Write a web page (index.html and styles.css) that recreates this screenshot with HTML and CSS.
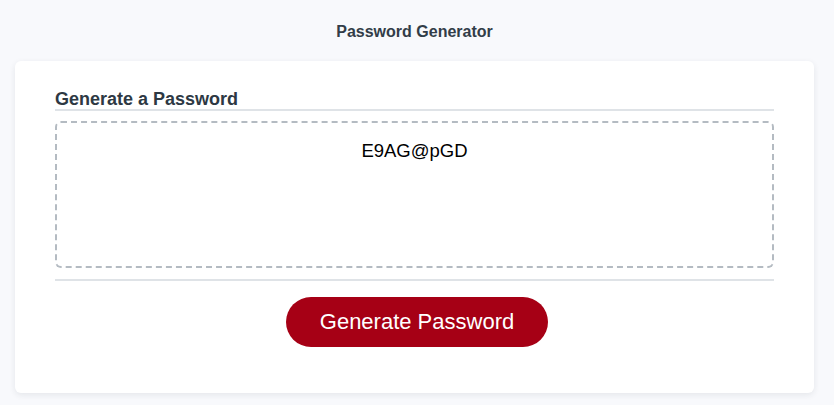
FILE: index.html
```html
<!DOCTYPE html>
<html lang="en">
<head>
<meta charset="utf-8">
<title>Password Generator</title>
<link rel="stylesheet" href="styles.css">
</head>
<body>
  <div class="wrapper">
    <header class="title">Password Generator</header>
    <div class="card">
      <h2 class="card-heading">Generate a Password</h2>
      <div class="card-body">
        <div class="password-box">E9AG@pGD</div>
      </div>
      <div class="card-footer">
        <button class="btn" type="button">Generate Password</button>
      </div>
    </div>
  </div>
</body>
</html>
```

FILE: styles.css
```css
* { box-sizing: border-box; }
html, body { margin: 0; padding: 0; }
body {
  background: #f8f9fc;
  font-family: "Liberation Sans", Arial, Helvetica, sans-serif;
  color: #2f3a45;
  width: 834px;
  height: 405px;
  overflow: hidden;
}
.wrapper {
  padding: 23px 20px 0 15px;
}
.title {
  text-align: center;
  font-size: 16px;
  font-weight: 700;
  line-height: 18px;
  color: #323d48;
}
.card {
  margin-top: 20px;
  background: #fff;
  border-radius: 6px;
  box-shadow: 0 2px 6px rgba(30, 40, 60, 0.09);
  padding: 28px 40px 46px;
  height: 332px;
}
.card-heading {
  margin: 0;
  font-size: 18px;
  font-weight: 700;
  line-height: 20px;
  color: #2d3843;
  border-bottom: 2px solid #dfe3e7;
}
.card-body {
  padding: 10px 0 11px;
  border-bottom: 2px solid #dfe3e7;
}
.password-box {
  height: 147px;
  border: 2px dashed #b4bbc2;
  border-radius: 6px;
  padding: 17px;
  text-align: center;
  font-size: 18.5px;
  color: #000;
}
.card-footer {
  padding-top: 16px;
  padding-left: 5px;
  display: flex;
  justify-content: center;
}
.btn {
  font-family: "Liberation Sans", Arial, Helvetica, sans-serif;
  font-size: 22px;
  color: #fff;
  background: #a60015;
  border: none;
  border-radius: 25px;
  width: 262px;
  height: 50px;
  padding: 0;
  cursor: pointer;
}
```
